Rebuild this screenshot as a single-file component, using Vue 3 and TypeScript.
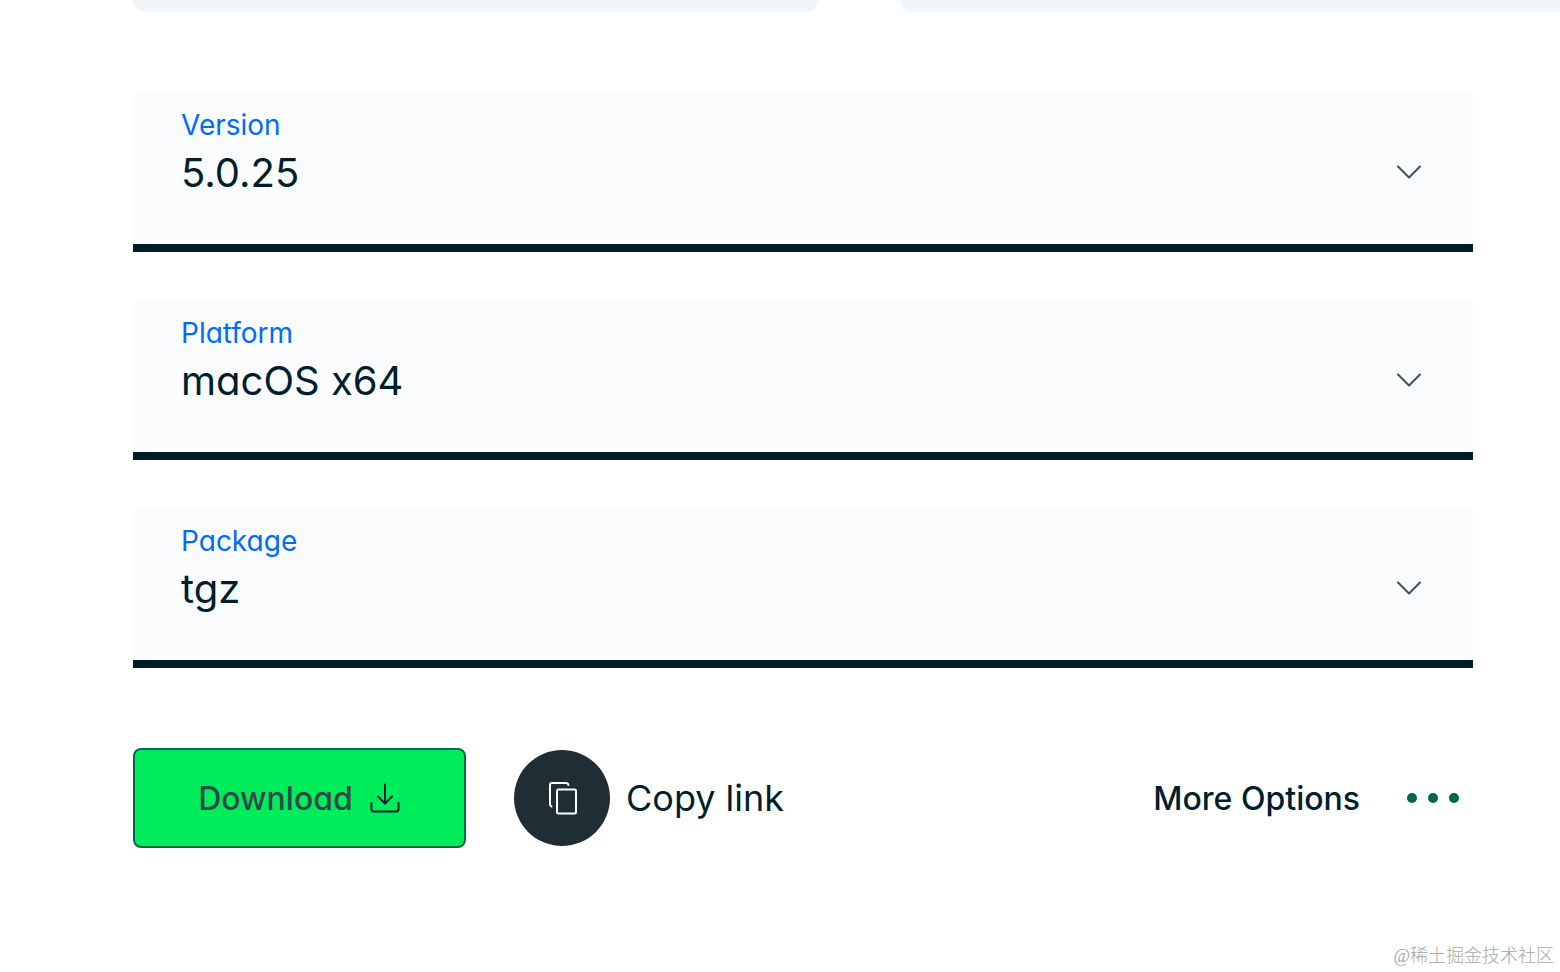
<script setup lang="ts">
import { ref } from 'vue'

interface Field {
  id: string
  label: string
  options: string[]
}

const fields: Field[] = [
  { id: 'version', label: 'Version', options: ['5.0.25'] },
  { id: 'platform', label: 'Platform', options: ['macOS x64'] },
  { id: 'package', label: 'Package', options: ['tgz'] },
]

const selected = ref<string[]>(fields.map((field) => field.options[0]))
</script>

<template>
  <main class="page">
    <div class="cards">
      <div class="card"></div>
      <div class="card card-last"></div>
    </div>

    <form class="form" @submit.prevent>
      <div v-for="(field, index) in fields" :key="field.id" class="field">
        <label class="label" :for="field.id">{{ field.label }}</label>
        <div class="control">
          <select :id="field.id" v-model="selected[index]" class="select">
            <option v-for="option in field.options" :key="option">{{ option }}</option>
          </select>
          <svg class="chevron" width="26" height="16" viewBox="0 0 26 16" aria-hidden="true">
            <path d="M2 2.5 L13 13.5 L24 2.5" />
          </svg>
        </div>
      </div>

      <div class="actions">
        <button class="download" type="submit">
          Download
          <svg width="32" height="32" viewBox="0 0 32 32" aria-hidden="true">
            <path d="M16 2.5 V21.5 M9 14.5 L16 21.5 L23 14.5 M2.5 21 V27 Q2.5 29.5 5 29.5 H27 Q29.5 29.5 29.5 27 V21" />
          </svg>
        </button>

        <button class="copy" type="button">
          <span class="copy-circle">
            <svg width="32" height="36" viewBox="0 0 32 36" aria-hidden="true">
              <path d="M22.5 5 Q22 3 20 3 H6 Q4 3 4 5 V24 Q4 26 5.5 26.5" />
              <rect x="11" y="9.5" width="19" height="24" rx="1.5" />
            </svg>
          </span>
          Copy link
        </button>

        <button class="more" type="button">
          More Options
          <svg width="54" height="12" viewBox="0 0 54 12" aria-hidden="true">
            <circle cx="6" cy="6" r="5" />
            <circle cx="27" cy="6" r="5" />
            <circle cx="48" cy="6" r="5" />
          </svg>
        </button>
      </div>
    </form>

    <footer class="credit">@稀土掘金技术社区</footer>
  </main>
</template>

<style>
body {
  margin: 0;
  background: #fff;
}
</style>

<style scoped>
.page {
  display: flex;
  flex-direction: column;
  box-sizing: border-box;
  min-height: 100vh;
  color: #001e2b;
  font-family: Inter, "Liberation Sans", sans-serif;
  /* Single-storey "a" */
  font-feature-settings: "cv11";
  font-variant-ligatures: none;
}

.cards {
  display: grid;
  grid-template-columns: 48fr 52fr;
  padding-left: 133px;
}

.card {
  height: 12px;
  border-radius: 0 0 16px 16px;
  background: #f2f6fa;
}

.card-last {
  margin-left: 82px;
  border-bottom-right-radius: 0;
}

.form {
  display: flex;
  flex-direction: column;
  gap: 48px;
  padding: 80px 87px 0 133px;
}

.field {
  padding-top: 16px;
  border-bottom: 8px solid #001c27;
  border-radius: 12px 4px 0 0;
  background: #f9fbfd;
}

.label {
  display: block;
  padding: 0 48px;
  color: #016bf8;
  font-size: 28px;
  line-height: 34px;
}

.control {
  display: grid;
  align-items: center;
}

.select {
  grid-area: 1 / 1;
  appearance: none;
  width: 100%;
  margin: 0;
  padding: 7px 96px 47px 48px;
  border: 0;
  background: transparent;
  color: inherit;
  font: inherit;
  font-feature-settings: inherit;
  font-size: 40px;
  line-height: 48px;
}

.chevron {
  grid-area: 1 / 1;
  align-self: start;
  justify-self: end;
  margin: 22px 51px 0 0;
  pointer-events: none;
  fill: none;
  stroke: #3d4f58;
  stroke-width: 2;
  stroke-linecap: round;
  stroke-linejoin: round;
}

.actions {
  display: flex;
  align-items: center;
  padding-top: 32px;
}

button {
  display: flex;
  align-items: center;
  margin: 0;
  padding: 0;
  border: 0;
  background: transparent;
  color: inherit;
  font: inherit;
  font-feature-settings: inherit;
  white-space: nowrap;
}

button svg {
  fill: none;
  stroke: currentColor;
  stroke-width: 2;
  stroke-linecap: round;
  stroke-linejoin: round;
}

.download {
  justify-content: center;
  gap: 16px;
  box-sizing: border-box;
  width: 333px;
  height: 100px;
  border: 2px solid #00684a;
  border-radius: 8px;
  background: #00ed5b;
  color: #2c4a47;
  font-size: 32px;
  font-weight: 500;
}

.download svg {
  color: #001e2b;
}

.copy {
  gap: 16px;
  margin-left: 48px;
  font-size: 36px;
}

.copy-circle {
  display: flex;
  align-items: center;
  justify-content: center;
  width: 96px;
  height: 96px;
  border-radius: 50%;
  background: #1f2d35;
  color: #fff;
}

.more {
  gap: 46px;
  margin-left: auto;
  padding-right: 13px;
  font-size: 32px;
  font-weight: 500;
}

.more svg {
  fill: #00684a;
  stroke: none;
}

.credit {
  margin-top: auto;
  padding: 0 6px 4px 0;
  color: #a6a6a6;
  font-family: "Liberation Serif", "Noto Sans CJK SC", serif;
  font-size: 18px;
  font-weight: 300;
  line-height: 24px;
  text-align: right;
}
</style>
